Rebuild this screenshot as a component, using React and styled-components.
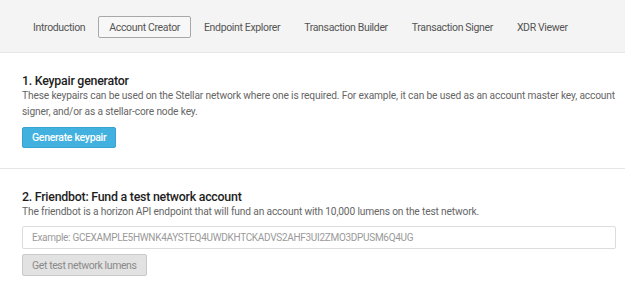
import React from "react";
import styled, { createGlobalStyle } from "styled-components";

const GlobalStyle = createGlobalStyle`
  html, body {
    margin: 0;
    padding: 0;
    background: #fff;
  }
  body {
    font-family: Roboto, "Liberation Sans", sans-serif;
    color: #333;
  }
`;

const tabs = [
  "Introduction",
  "Account Creator",
  "Endpoint Explorer",
  "Transaction Builder",
  "Transaction Signer",
  "XDR Viewer",
];

export default function App() {
  return (
    <Page>
      <GlobalStyle />
      <Nav>
        {tabs.map((tab) => (
          <Tab key={tab} active={tab === "Account Creator"}>
            {tab}
          </Tab>
        ))}
      </Nav>

      <Section>
        <Title>1. Keypair generator</Title>
        <Text>
          These keypairs can be used on the Stellar network where one is
          required. For example, it can be used as an account master key,
          account signer, and/or as a stellar-core node key.
        </Text>
        <PrimaryBtn>Generate keypair</PrimaryBtn>
      </Section>

      <Section>
        <Title>2. Friendbot: Fund a test network account</Title>
        <Text>
          The friendbot is a horizon API endpoint that will fund an account
          with 10,000 lumens on the test network.
        </Text>
        <Input placeholder="Example: GCEXAMPLE5HWNK4AYSTEQ4UWDKHTCKADVS2AHF3UI2ZMO3DPUSM6Q4UG" />
        <DisabledBtn>Get test network lumens</DisabledBtn>
      </Section>
    </Page>
  );
}

const Page = styled.div`
  width: 625px;
  height: 296px;
  overflow: hidden;
`;

const Nav = styled.div`
  display: flex;
  align-items: center;
  gap: 2px;
  height: 50px;
  padding: 2px 0 0 22px;
  background-color: #f4f4f4;
  border-bottom: 1px solid #e6e6e6;
`;

const Tab = styled.div`
  height: 22px;
  box-sizing: border-box;
  display: flex;
  align-items: center;
  padding: 0 10px;
  font-size: 10.5px;
  letter-spacing: -0.35px;
  color: #555;
  border: 1px solid ${({ active }) => (active ? "#a8a8a8" : "transparent")};
  border-radius: 2px;
  background-color: ${({ active }) => (active ? "#f7f7f7" : "transparent")};
`;

const Section = styled.div`
  padding: 21px 9px 20px 22px;
  border-bottom: 1px solid #e6e6e6;

  &:last-child {
    border-bottom: none;
  }
`;

const Title = styled.div`
  font-size: 12.4px;
  line-height: 14px;
  font-weight: 500;
  letter-spacing: -0.25px;
  color: #1e1e1e;
`;

const Text = styled.div`
  font-size: 10.2px;
  line-height: 16px;
  letter-spacing: -0.15px;
  color: #666;
`;

const PrimaryBtn = styled.button`
  display: block;
  margin-top: 7px;
  height: 21px;
  padding: 0 9px;
  font-family: inherit;
  font-size: 10.5px;
  font-weight: 500;
  letter-spacing: -0.3px;
  color: #fff;
  background-color: #42b1e0;
  border: 1px solid #37a3d1;
  border-radius: 2px;
`;

const Input = styled.input`
  display: block;
  box-sizing: border-box;
  width: 100%;
  height: 23px;
  margin-top: 6px;
  padding: 0 9px;
  font-family: inherit;
  font-size: 10px;
  letter-spacing: -0.3px;
  color: #333;
  background: #fff;
  border: 1px solid #dcdcdc;
  border-radius: 2px;

  &::placeholder {
    color: #9a9a9a;
  }
`;

const DisabledBtn = styled.button`
  display: block;
  margin-top: 5px;
  height: 22px;
  padding: 0 9px;
  font-family: inherit;
  font-size: 10.5px;
  letter-spacing: -0.4px;
  color: #8a8a8a;
  background-color: #e2e2e2;
  border: 1px solid #c9c9c9;
  border-radius: 2px;
`;
